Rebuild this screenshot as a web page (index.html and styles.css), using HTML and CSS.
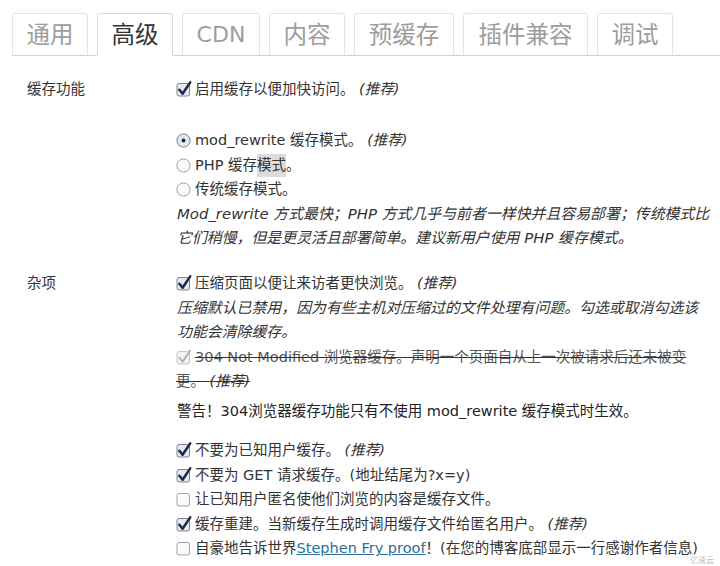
FILE: index.html
```html
<!DOCTYPE html>
<html lang="zh-CN">
<head>
    <meta charset="UTF-8">
    <title>WP Super Cache 高级设置</title>
    <link rel="stylesheet" href="styles.css">
</head>
<body>

    <!-- tabs -->
    <div class="tabs">
        <a class="tab">通用</a>
        <a class="tab active">高级</a>
        <a class="tab cdn">CDN</a>
        <a class="tab">内容</a>
        <a class="tab three">预缓存</a>
        <a class="tab four">插件兼容</a>
        <a class="tab">调试</a>
    </div>

    <div class="form">
        <!-- 缓存功能 -->
        <div class="row">
            <div class="label">缓存功能</div>
            <div class="field">
                <label class="opt">
                    <svg class="cb" width="16" height="16" viewBox="0 0 16 16"><rect x="1" y="2.5" width="12.5" height="12.5" rx="2" fill="#e3eaf4" stroke="#7f838a"/><path d="M3.4 8.8 L6.6 12.8 L14.2 1.4" fill="none" stroke="#1c2845" stroke-width="2.5" stroke-linecap="round" stroke-linejoin="round"/></svg>启用缓存以便加快访问。 <em>(推荐)</em>
                </label>
                <div class="spacer"></div>
                <label class="opt">
                    <svg class="rd" width="16" height="16" viewBox="0 0 16 16"><circle cx="7.5" cy="8.5" r="6.6" fill="#e1e9f4" stroke="#7f838a"/><circle cx="7.5" cy="8.5" r="1.9" fill="#1c2845"/></svg>mod_rewrite 缓存模式。 <em>(推荐)</em>
                </label>
                <label class="opt">
                    <svg class="rd" width="16" height="16" viewBox="0 0 16 16"><circle cx="7.5" cy="8.5" r="6.6" fill="#fbfbfb" stroke="#9ea1a6"/></svg>PHP 缓存<span class="sel">模式</span>。
                </label>
                <label class="opt">
                    <svg class="rd" width="16" height="16" viewBox="0 0 16 16"><circle cx="7.5" cy="8.5" r="6.6" fill="#fbfbfb" stroke="#9ea1a6"/></svg>传统缓存模式。
                </label>
                <p class="desc">Mod_rewrite 方式最快；PHP 方式几乎与前者一样快并且容易部署；传统模式比<br>它们稍慢，但是更灵活且部署简单。建议新用户使用 PHP 缓存模式。</p>
            </div>
        </div>

        <!-- 杂项 -->
        <div class="row misc">
            <div class="label">杂项</div>
            <div class="field">
                <label class="opt">
                    <svg class="cb" width="16" height="16" viewBox="0 0 16 16"><rect x="1" y="2.5" width="12.5" height="12.5" rx="2" fill="#e3eaf4" stroke="#7f838a"/><path d="M3.4 8.8 L6.6 12.8 L14.2 1.4" fill="none" stroke="#1c2845" stroke-width="2.5" stroke-linecap="round" stroke-linejoin="round"/></svg>压缩页面以便让来访者更快浏览。 <em>(推荐)</em>
                </label>
                <p class="desc">压缩默认已禁用，因为有些主机对压缩过的文件处理有问题。勾选或取消勾选该<br>功能会清除缓存。</p>
                <label class="opt off">
                    <svg class="cb" width="16" height="16" viewBox="0 0 16 16"><rect x="1" y="2.5" width="12.5" height="12.5" rx="2" fill="#f2f2f2" stroke="#c6c6c6"/><path d="M3.4 8.8 L6.6 12.8 L14.2 1.4" fill="none" stroke="#aeaeae" stroke-width="1.8" stroke-linecap="round" stroke-linejoin="round"/></svg><s>304 Not Modified 浏览器缓存。声明一个页面自从上一次被请求后还未被变<br>更。 <em>(推荐)</em></s>
                </label>
                <p class="warn">警告！304浏览器缓存功能只有不使用 mod_rewrite 缓存模式时生效。</p>
                <div class="group">
                    <label class="opt">
                        <svg class="cb" width="16" height="16" viewBox="0 0 16 16"><rect x="1" y="2.5" width="12.5" height="12.5" rx="2" fill="#e3eaf4" stroke="#7f838a"/><path d="M3.4 8.8 L6.6 12.8 L14.2 1.4" fill="none" stroke="#1c2845" stroke-width="2.5" stroke-linecap="round" stroke-linejoin="round"/></svg>不要为已知用户缓存。 <em>(推荐)</em>
                    </label>
                    <label class="opt">
                        <svg class="cb" width="16" height="16" viewBox="0 0 16 16"><rect x="1" y="2.5" width="12.5" height="12.5" rx="2" fill="#e3eaf4" stroke="#7f838a"/><path d="M3.4 8.8 L6.6 12.8 L14.2 1.4" fill="none" stroke="#1c2845" stroke-width="2.5" stroke-linecap="round" stroke-linejoin="round"/></svg>不要为 GET 请求缓存。(地址结尾为?x=y)
                    </label>
                    <label class="opt">
                        <svg class="cb" width="16" height="16" viewBox="0 0 16 16"><rect x="1" y="2.5" width="12.5" height="12.5" rx="2" fill="#fbfbfb" stroke="#9ea1a6"/></svg>让已知用户匿名使他们浏览的内容是缓存文件。
                    </label>
                    <label class="opt">
                        <svg class="cb" width="16" height="16" viewBox="0 0 16 16"><rect x="1" y="2.5" width="12.5" height="12.5" rx="2" fill="#e3eaf4" stroke="#7f838a"/><path d="M3.4 8.8 L6.6 12.8 L14.2 1.4" fill="none" stroke="#1c2845" stroke-width="2.5" stroke-linecap="round" stroke-linejoin="round"/></svg>缓存重建。当新缓存生成时调用缓存文件给匿名用户。 <em>(推荐)</em>
                    </label>
                    <label class="opt">
                        <svg class="cb" width="16" height="16" viewBox="0 0 16 16"><rect x="1" y="2.5" width="12.5" height="12.5" rx="2" fill="#fbfbfb" stroke="#9ea1a6"/></svg>自豪地告诉世界<a href="#" class="link">Stephen Fry proof</a>！(在您的博客底部显示一行感谢作者信息)
                    </label>
                </div>
            </div>
        </div>
    </div>

    <div class="mark">亿速云</div>

</body>
</html>
```

FILE: styles.css
```css
* {
  margin: 0;
  padding: 0;
  box-sizing: border-box;
}

body {
  background-color: white;
  color: #333;
  font-family: "DejaVu Sans", "Noto Sans CJK SC", sans-serif;
  font-size: 14.5px;
  line-height: 24.5px;
  width: 720px;
  height: 566px;
  overflow: hidden;
}

/* tabs */
.tabs {
  display: flex;
  gap: 9px;
  margin-left: 12px;
  padding-top: 13px;
  border-bottom: 1px solid #cfd3d8;
}
.tab {
  display: block;
  width: 76px;
  height: 43px;
  margin-bottom: -1px;
  line-height: 38px;
  text-align: center;
  font-family: "Noto Sans CJK SC", "DejaVu Sans", sans-serif;
  font-size: 23.5px;
  color: #9d9d9d;
  border: 1px solid #dde6ef;
  border-bottom-color: #cfd3d8;
  border-radius: 3px 3px 0 0;
  background-color: white;
}
.tab.active {
  color: #333;
  border-color: #cfdbe7;
  border-bottom-color: white;
}
.tab.cdn {
  width: 78px;
  line-height: 42px;
  font-family: "DejaVu Sans", sans-serif;
  font-size: 22px;
}
.tab.three {
  width: 100px;
}
.tab.four {
  width: 125px;
}

/* form */
.form {
  padding: 21px 0 0 27px;
}
.row {
  display: flex;
}
.row.misc {
  margin-top: 20.5px;
}
.label {
  width: 149px;
  flex-shrink: 0;
  font-size: 14.5px;
}
.field {
  width: 544px;
}

.opt {
  display: block;
  white-space: nowrap;
}
.cb, .rd {
  vertical-align: -3px;
  margin-right: 3px;
}
em {
  font-style: italic;
  color: #333;
}
.spacer {
  height: 26.5px;
}
.sel {
  background-color: #dcdcdc;
  padding: 3px 0 4px;
}

.desc {
  font-style: italic;
  font-size: 14.9px;
  padding-left: 1px;
  white-space: nowrap;
}

.off s {
  color: #555;
  text-decoration: line-through;
  text-decoration-color: #333;
}

.warn {
  margin-top: 5.5px;
  padding-left: 1px;
  color: #222;
}
.group {
  margin-top: 14.5px;
}

.link {
  color: #2a6f98;
  text-decoration: underline;
}

.mark {
  position: absolute;
  right: 6px;
  bottom: 0;
  font-size: 8px;
  line-height: 10px;
  color: #b9c2c9;
}
```
